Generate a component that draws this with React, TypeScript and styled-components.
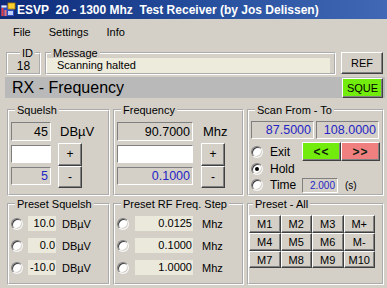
import React from 'react'
import styled, { createGlobalStyle } from 'styled-components'

const GlobalStyle = createGlobalStyle`
   html, body {
      margin: 0;
      padding: 0;
      background: #d4d0c8;
   }
   body {
      font-family: "Liberation Sans", Arial, sans-serif;
   }
`

const Window = styled.div`
   width: 387px;
   height: 288px;
   overflow: hidden;
   background: #d4d0c8;
   color: #000;
   font-size: 11px;
   display: flex;
   flex-direction: column;
`

const TitleBar = styled.div`
   height: 19px;
   flex: none;
   display: flex;
   align-items: center;
   gap: 1px;
   padding-left: 0;
   background: linear-gradient(to right, #0c2a78, #27509f 55%, #4068b4);
   color: #fff;
   font-weight: bold;
   font-size: 12px;
   white-space: pre;
`

const MenuBar = styled.div`
   height: 22px;
   flex: none;
   display: flex;
   align-items: center;
   gap: 18px;
   padding: 3px 0 0 13px;
   box-sizing: border-box;
`

const MenuItem = styled.span`
   font-size: 11px;
`

const HeaderRow = styled.div`
   display: flex;
   align-items: flex-end;
   height: 28px;
   margin: 6px 0 0 6px;
   flex: none;
`

const Group = styled.fieldset<{ $pad?: number }>`
   margin: 0;
   min-width: 0;
   box-sizing: border-box;
   padding: 0 ${(p) => p.$pad ?? 2}px 2px;
   border: 2px groove #fff;
`

const GroupLabel = styled.legend`
   margin-left: 4px;
   padding: 0 2px;
   font-size: 11px;
   line-height: 12px;
`

const IdGroup = styled(Group)`
   width: 35px;
   height: 28px;
   padding: 0;
   text-align: center;
   font-size: 12px;
   line-height: 14px;
`

const MessageGroup = styled(Group)`
   width: 291px;
   height: 28px;
   margin-left: 4px;
   padding: 0;
`

const MessageField = styled.div`
   width: 283px;
   height: 15px;
   margin-top: -1px;
   padding-left: 10px;
   box-sizing: border-box;
   background: #ecebdc;
   line-height: 15px;
   font-size: 11px;
`

const Button = styled.button<{ $bg?: string; $w?: number; $h?: number }>`
   box-sizing: border-box;
   margin: 0;
   padding: 0;
   width: ${(p) => (p.$w ? `${p.$w}px` : 'auto')};
   height: ${(p) => (p.$h ? `${p.$h}px` : 'auto')};
   font-family: inherit;
   font-size: 11px;
   color: #000;
   background: ${(p) => p.$bg ?? '#d4d0c8'};
   border: 1px solid;
   border-color: #fff #404040 #404040 #fff;
   box-shadow: inset -1px -1px 0 #808080;
`

const RefButton = styled(Button)`
   margin: 0 0 1px 5px;
`

const ModeBar = styled.div`
   display: flex;
   align-items: center;
   justify-content: space-between;
   height: 21px;
   flex: none;
   margin: 2px 2px 0 5px;
   padding: 0 2px 0 7px;
   background: #b9b9b9;
   font-size: 16px;
`

const Panels = styled.div`
   display: grid;
   grid-template-columns: 103px 131px 137px;
   grid-template-rows: 92px 87px;
   column-gap: 3px;
   row-gap: 2px;
   margin-top: 6px;
   padding-left: 7px;
`

const StepperGrid = styled.div<{ $fw: number; $gap: number }>`
   display: grid;
   grid-template-columns: ${(p) => p.$fw}px auto;
   grid-template-rows: 19px 18px 18px;
   column-gap: ${(p) => p.$gap}px;
   row-gap: 4px;
   padding-top: 6px;
`

const Field = styled.div<{ $w?: number; $h?: number; $blue?: boolean; $white?: boolean; $size?: number }>`
   box-sizing: border-box;
   width: ${(p) => (p.$w ? `${p.$w}px` : 'auto')};
   height: ${(p) => (p.$h ? `${p.$h}px` : 'auto')};
   border: 1px solid;
   border-color: #808080 #fff #fff #808080;
   background: ${(p) => (p.$white ? '#fff' : 'transparent')};
   color: ${(p) => (p.$blue ? '#2424c4' : '#000')};
   font-size: ${(p) => p.$size ?? 12.5}px;
   text-align: right;
   padding-right: 2px;
   display: flex;
   align-items: center;
   justify-content: flex-end;
`

const Unit = styled.span<{ $indent: number }>`
   font-size: 13px;
   align-self: center;
   padding-left: ${(p) => p.$indent}px;
`

const ButtonStack = styled.div`
   grid-column: 2;
   grid-row: 2 / span 2;
   display: flex;
   flex-direction: column;
   width: 24px;
   margin: -2px 0 -3px;
`

const StackButton = styled(Button)`
   flex: 1;
   font-size: 12px;
`

const FieldPair = styled.div`
   display: flex;
   gap: 2px;
   padding-top: 5px;
`

const ScanGrid = styled.div`
   display: grid;
   grid-template-columns: 51px auto;
   grid-template-rows: 19px 16px 16px;
   margin-top: 3px;
`

const RadioLine = styled.label`
   display: flex;
   align-items: center;
   gap: 7px;
   font-size: 12px;
`

const Radio = styled.span<{ $checked?: boolean }>`
   width: 12px;
   height: 12px;
   flex: none;
   box-sizing: border-box;
   border-radius: 50%;
   background: #fff;
   border: 1px solid;
   border-color: #808080 #f4f4f4 #f4f4f4 #808080;
   box-shadow: inset 1px 1px 0 #404040, inset -1px -1px 0 #d4d0c8;
   display: flex;
   align-items: center;
   justify-content: center;
   &::after {
      content: '';
      width: 4px;
      height: 4px;
      border-radius: 50%;
      background: ${(p) => (p.$checked ? '#000' : 'transparent')};
   }
`

const ArrowRow = styled.div`
   display: flex;
`

const ArrowButton = styled(Button)`
   font-size: 12px;
   font-weight: bold;
   color: #102010;
   letter-spacing: 1px;
`

const TimeRow = styled.div`
   display: flex;
   align-items: center;
   gap: 7px;
   font-size: 10px;
`

const PresetList = styled.div`
   display: grid;
   grid-auto-rows: 21px;
   row-gap: 1px;
   padding-top: 3px;
`

const PresetRow = styled.div`
   display: flex;
   align-items: center;
`

const PresetValue = styled.span<{ $w: number; $ml: number }>`
   box-sizing: border-box;
   width: ${(p) => p.$w}px;
   height: 15px;
   margin-left: ${(p) => p.$ml}px;
   padding-right: 1px;
   background: #ebe9dc;
   text-align: right;
   font-size: 11px;
   line-height: 15px;
`

const PresetUnit = styled.span<{ $ml: number }>`
   margin-left: ${(p) => p.$ml}px;
   font-size: 11px;
`

const MemoryGrid = styled.div`
   display: grid;
   grid-template-columns: repeat(4, 31.5px);
   grid-template-rows: 18px 18px 17px;
   margin-top: 5px;
`

const AppIcon = () => (
   <svg width="16" height="16" viewBox="0 0 16 16">
      <rect x="0.5" y="2.5" width="14" height="12" fill="#2a4cc0" stroke="#1a2a70" />
      <rect x="8" y="1" width="7" height="6" fill="#f8d030" stroke="#b08000" strokeWidth="0.8" />
      <rect x="1.5" y="6" width="2" height="8" fill="#e83838" />
      <rect x="4.5" y="8" width="2" height="6" fill="#f07070" />
      <rect x="1.5" y="3.5" width="5" height="2" fill="#f0f0f0" />
      <rect x="8" y="9" width="5" height="4" fill="#c0d0f8" />
   </svg>
)

type StepperProps = {
   title: string
   value: string
   step: string
   unit: string
   fieldWidth: number
   gap: number
}

const Stepper: React.FC<StepperProps> = ({ title, value, step, unit, fieldWidth, gap }) => (
   <Group>
      <GroupLabel>{title}</GroupLabel>
      <StepperGrid $fw={fieldWidth} $gap={gap}>
         <Field $w={fieldWidth}>{value}</Field>
         <Unit $indent={2}>{unit}</Unit>
         <Field $w={fieldWidth} $white />
         <Field $w={fieldWidth} $blue>
            {step}
         </Field>
         <ButtonStack>
            <StackButton>+</StackButton>
            <StackButton>-</StackButton>
         </ButtonStack>
      </StepperGrid>
   </Group>
)

type PresetProps = {
   title: string
   values: string[]
   unit: string
   width: number
   valueGap: number
   unitGap: number
}

const PresetGroup: React.FC<PresetProps> = ({ title, values, unit, width, valueGap, unitGap }) => (
   <Group>
      <GroupLabel>{title}</GroupLabel>
      <PresetList>
         {values.map((v) => (
            <PresetRow key={v}>
               <Radio />
               <PresetValue $w={width} $ml={valueGap}>
                  {v}
               </PresetValue>
               <PresetUnit $ml={unitGap}>{unit}</PresetUnit>
            </PresetRow>
         ))}
      </PresetList>
   </Group>
)

const memories = ['M1', 'M2', 'M3', 'M+', 'M4', 'M5', 'M6', 'M-', 'M7', 'M8', 'M9', 'M10']

const App: React.FC = () => (
   <>
      <GlobalStyle />
      <Window>
         <TitleBar>
            <AppIcon />
            <span>ESVP  20 - 1300 Mhz  Test Receiver (by Jos Delissen)</span>
         </TitleBar>
         <MenuBar>
            <MenuItem>File</MenuItem>
            <MenuItem>Settings</MenuItem>
            <MenuItem>Info</MenuItem>
         </MenuBar>
         <HeaderRow>
            <IdGroup>
               <GroupLabel>ID</GroupLabel>
               18
            </IdGroup>
            <MessageGroup>
               <GroupLabel>Message</GroupLabel>
               <MessageField>Scanning halted</MessageField>
            </MessageGroup>
            <RefButton $w={42} $h={22}>
               REF
            </RefButton>
         </HeaderRow>
         <ModeBar>
            <span>RX - Frequency</span>
            <Button $bg="#72ec0c" $w={41} $h={20}>
               SQUE
            </Button>
         </ModeBar>
         <Panels>
            <Stepper title="Squelsh" value="45" step="5" unit="DBµV" fieldWidth={40} gap={7} />
            <Stepper title="Frequency" value="90.7000" step="0.1000" unit="Mhz" fieldWidth={76} gap={8} />
            <Group>
               <GroupLabel>Scan  From - To</GroupLabel>
               <FieldPair>
                  <Field $w={63} $h={18} $blue>
                     87.5000
                  </Field>
                  <Field $w={63} $h={18} $blue>
                     108.0000
                  </Field>
               </FieldPair>
               <ScanGrid>
                  <RadioLine>
                     <Radio />
                     Exit
                  </RadioLine>
                  <ArrowRow>
                     <ArrowButton $bg="#72ec0c" $w={39} $h={19}>
                        &lt;&lt;
                     </ArrowButton>
                     <ArrowButton $bg="#f08080" $w={39} $h={19}>
                        &gt;&gt;
                     </ArrowButton>
                  </ArrowRow>
                  <RadioLine>
                     <Radio $checked />
                     Hold
                  </RadioLine>
                  <span />
                  <RadioLine>
                     <Radio />
                     Time
                  </RadioLine>
                  <TimeRow>
                     <Field $w={36} $h={15} $blue $size={10}>
                        2.000
                     </Field>
                     (s)
                  </TimeRow>
               </ScanGrid>
            </Group>
            <PresetGroup
               title="Preset Squelsh"
               values={['10.0', '0.0', '-10.0']}
               unit="DBµV"
               width={28}
               valueGap={5}
               unitGap={6}
            />
            <PresetGroup
               title="Preset RF Freq. Step"
               values={['0.0125', '0.1000', '1.0000']}
               unit="Mhz"
               width={58}
               valueGap={6}
               unitGap={9}
            />
            <Group $pad={0}>
               <GroupLabel>Preset - All</GroupLabel>
               <MemoryGrid>
                  {memories.map((m) => (
                     <Button key={m}>{m}</Button>
                  ))}
               </MemoryGrid>
            </Group>
         </Panels>
      </Window>
   </>
)

export default App
